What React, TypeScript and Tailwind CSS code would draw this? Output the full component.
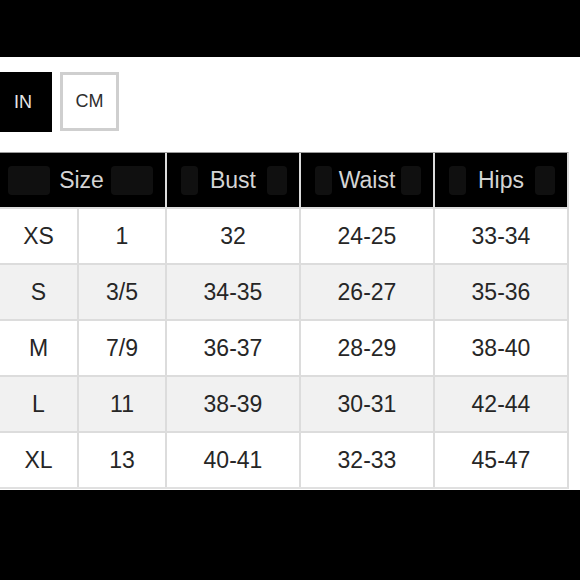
const rows = [
  { size: 'XS', num: '1', bust: '32', waist: '24-25', hips: '33-34' },
  { size: 'S', num: '3/5', bust: '34-35', waist: '26-27', hips: '35-36' },
  { size: 'M', num: '7/9', bust: '36-37', waist: '28-29', hips: '38-40' },
  { size: 'L', num: '11', bust: '38-39', waist: '30-31', hips: '42-44' },
  { size: 'XL', num: '13', bust: '40-41', waist: '32-33', hips: '45-47' },
]

function HeadCell({ label, span }: { label: string; span?: boolean }) {
  return (
    <div
      className={`relative flex items-center justify-center bg-black text-[#d4d4d4] ${span ? 'col-span-2' : ''}`}
    >
      {/* blurry dark patches left over in the capture */}
      <div className={`absolute top-[13px] bottom-[12px] bg-[#101010] rounded-sm ${span ? 'left-[10px] w-[42px]' : 'left-[14px] w-[17px]'}`} />
      <div className={`absolute top-[13px] bottom-[12px] bg-[#101010] rounded-sm ${span ? 'right-[12px] w-[42px]' : 'right-[12px] w-[20px]'}`} />
      <span className="relative">{label}</span>
    </div>
  )
}

export default function App() {
  return (
    <div
      className="w-[580px] h-[580px] bg-black flex flex-col overflow-hidden"
      style={{ fontFamily: '"Liberation Sans", Arial, sans-serif' }}
    >
      <div className="h-[57px] shrink-0" />

      <div className="h-[433px] shrink-0 bg-white flex flex-col">
        <div className="flex gap-[8px] mt-[15px] -ml-[6px]">
          <div className="w-[58px] h-[60px] bg-black flex items-center justify-center text-[18px] text-[#e6e6e6]">
            IN
          </div>
          <div className="w-[59px] h-[59px] border-[3px] border-[#cfcfcf] flex items-center justify-center text-[18px] text-[#2e2e2e]">
            CM
          </div>
        </div>

        <div className="mt-[20px] w-[571px] -ml-[2px] bg-[#dcdcdc] border-t border-[#9a9a9a] border-r-2 border-r-[#dcdcdc] border-b-2 border-b-[#e0e0e0] grid grid-cols-[79px_86px_132px_132px_132px] auto-rows-[54px] gap-[2px] text-[23px]">
          <HeadCell label="Size" span />
          <HeadCell label="Bust" />
          <HeadCell label="Waist" />
          <HeadCell label="Hips" />

          {rows.map((r, i) => {
            const bg = i % 2 === 1 ? 'bg-[#f1f1f1]' : 'bg-white'
            return [r.size, r.num, r.bust, r.waist, r.hips].map((v, j) => (
              <div
                key={`${i}-${j}`}
                className={`${bg} flex items-center justify-center text-[#262626] ${j === 0 ? 'pl-[2px]' : ''}`}
              >
                {v}
              </div>
            ))
          })}
        </div>
      </div>

      <div className="flex-1" />
    </div>
  )
}
